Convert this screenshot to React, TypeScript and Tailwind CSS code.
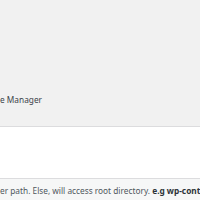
import React from "react";

export default function App() {
  return (
    <div
      className="w-[200px] h-[200px] overflow-hidden flex flex-col bg-[#f1f1f1] text-[#50575e]"
      style={{ fontFamily: '"Noto Sans", "Open Sans", sans-serif' }}
    >
      <div className="h-[126px] flex flex-col justify-end pb-[20px]">
        <div className="text-[8.3px] leading-[12px] whitespace-nowrap text-[#3c434a]">e Manager</div>
      </div>
      <div className="h-[53px] bg-white border-t border-b border-[#dcdcde]"></div>
      <div className="flex-1 bg-[#f6f7f7] pt-[6px]">
        <div className="text-[8.3px] leading-[12px] whitespace-nowrap text-[#50575e]">
          er path. Else, will access root directory. <b className="text-[#2c3338]">e.g wp-content</b>
        </div>
      </div>
    </div>
  );
}
